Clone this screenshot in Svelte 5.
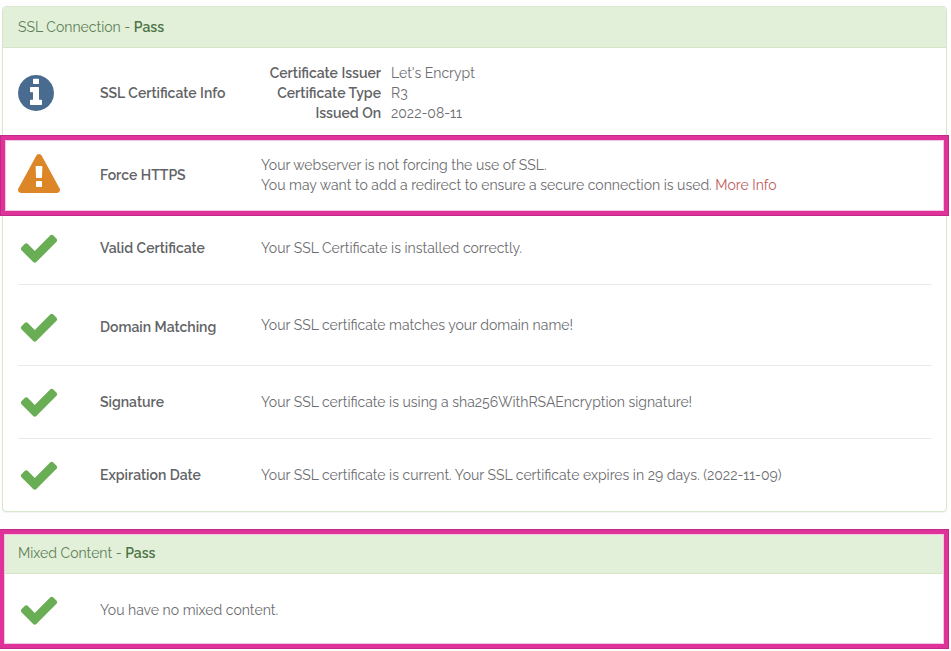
<script>
  const icons = {
    info: {
      box: '128 0 1792 1792',
      path: 'M1152 1376v-160q0-14-9-23t-23-9h-96v-512q0-14-9-23t-23-9h-320q-14 0-23 9t-9 23v160q0 14 9 23t23 9h96v320h-96q-14 0-23 9t-9 23v160q0 14 9 23t23 9h448q14 0 23-9t9-23zm-128-896v-160q0-14-9-23t-23-9h-192q-14 0-23 9t-9 23v160q0 14 9 23t23 9h192q14 0 23-9t9-23zm640 416q0 209-103 385.5t-279.5 279.5-385.5 103-385.5-103-279.5-279.5-103-385.5 103-385.5 279.5-279.5 385.5-103 385.5 103 279.5 279.5 103 385.5z'
    },
    warning: {
      box: '0 0 1792 1792',
      path: 'M1024 1375v-190q0-14-9.5-23.5t-22.5-9.5h-192q-13 0-22.5 9.5t-9.5 23.5v190q0 14 9.5 23.5t22.5 9.5h192q13 0 22.5-9.5t9.5-23.5zm-2-374l18-459q0-12-10-19-13-11-24-11h-220q-11 0-24 11-10 7-10 21l17 457q0 10 10 16.5t24 6.5h185q14 0 23.5-6.5t10.5-16.5zm-14-934l768 1408q35 63-2 126-17 29-46.5 46t-63.5 17h-1536q-34 0-63.5-17t-46.5-46q-37-63-2-126l768-1408q17-31 47-49t65-18 65 18 47 49z'
    },
    check: {
      box: '0 0 1792 1792',
      path: 'M1671 566q0 40-28 68l-724 724-136 136q-28 28-68 28t-68-28l-136-136-362-362q-28-28-28-68t28-68l136-136q28-28 68-28t68 28l294 295 656-657q28-28 68-28t68 28l136 136q28 28 28 68z'
    }
  };

  const certificate = [
    ['Certificate Issuer', "Let's Encrypt"],
    ['Certificate Type', 'R3'],
    ['Issued On', '2022-08-11']
  ];

  const checks = [
    { name: 'Valid Certificate', text: 'Your SSL Certificate is installed correctly.' },
    { name: 'Domain Matching', text: 'Your SSL certificate matches your domain name!', tall: true },
    { name: 'Signature', text: 'Your SSL certificate is using a sha256WithRSAEncryption signature!' },
    { name: 'Expiration Date', text: 'Your SSL certificate is current. Your SSL certificate expires in 29 days. (2022-11-09)' }
  ];
</script>

{#snippet icon(kind)}
  <svg class="icon {kind}" viewBox={icons[kind].box} aria-hidden="true"><path d={icons[kind].path} /></svg>
{/snippet}

<main>
  <section class="panel">
    <h2>SSL Connection - <strong>Pass</strong></h2>
    <div class="rows">
      <div class="row first">
        {@render icon('info')}
        <h3>SSL Certificate Info</h3>
        <dl>
          {#each certificate as [term, value]}
            <dt>{term}</dt>
            <dd>{value}</dd>
          {/each}
        </dl>
      </div>
      <div class="row marked">
        {@render icon('warning')}
        <h3>Force HTTPS</h3>
        <p>
          Your webserver is not forcing the use of SSL.<br />
          You may want to add a redirect to ensure a secure connection is used. <a href="#more">More Info</a>
        </p>
      </div>
      {#each checks as check}
        <div class="row" class:tall={check.tall}>
          {@render icon('check')}
          <h3>{check.name}</h3>
          <p>{check.text}</p>
        </div>
      {/each}
    </div>
  </section>

  <section class="panel marked">
    <h2>Mixed Content - <strong>Pass</strong></h2>
    <div class="rows">
      <div class="row">
        {@render icon('check')}
        <p>You have no mixed content.</p>
      </div>
    </div>
  </section>
</main>

<style>
  :global(body) {
    margin: 0;
    background: #fefefe;
  }

  main {
    padding: 6px 4px 4px 2px;
    font: 400 14px/20px Raleway, Lato, sans-serif;
    color: #6c6d70;
  }

  .panel {
    position: relative;
    margin-bottom: 20px;
    border: 1px solid #d8e6cb;
    border-radius: 4px;
    background: #fff;
    box-shadow: 0 1px 1px rgba(0, 0, 0, 0.05);
  }

  .panel:last-child {
    margin-bottom: 0;
  }

  h2 {
    margin: 0;
    padding: 10px 15px;
    border-bottom: 1px solid #d5e5c7;
    border-radius: 3px 3px 0 0;
    background: #e2f0d9;
    color: #5f8058;
    font-size: 14px;
    font-weight: 400;
  }

  strong,
  h3,
  dt {
    font-weight: 600;
  }

  strong {
    color: #4d7346;
  }

  h3,
  dt {
    color: #626366;
  }

  .rows {
    padding: 0 14px 0 15px;
  }

  .row {
    position: relative;
    display: flex;
    align-items: center;
    min-height: 72px;
    border-bottom: 1px solid #eaeaea;
  }

  .row.first {
    min-height: 90px;
  }

  .row.tall {
    min-height: 76px;
    padding-top: 4px;
  }

  .row.tall p {
    padding-bottom: 4px;
  }

  .row:last-child {
    border-bottom: 0;
  }

  .icon {
    flex: none;
    width: 42px;
    height: 42px;
    margin-right: 40px;
  }

  .info {
    fill: #496b90;
  }

  .warning {
    fill: #dc8627;
  }

  .check {
    fill: #69ad54;
  }

  h3 {
    flex: none;
    width: 161px;
    margin: 0;
    font-size: 14px;
  }

  p {
    margin: 0;
  }

  dl {
    display: grid;
    grid-template-columns: 120px auto;
    column-gap: 10px;
    margin: 0;
  }

  dt {
    text-align: right;
  }

  dd {
    margin: 0;
  }

  a {
    color: #c0605c;
    text-decoration: none;
  }

  .marked::after {
    content: '';
    position: absolute;
    inset: -4px -3px -3px -4px;
    border: 5px solid #df3399;
    box-shadow: inset 0 0 0 1px #f3c6e3;
    outline: 1px solid #c12a88;
    outline-offset: -1px;
    pointer-events: none;
  }

  .row.marked::after {
    inset: -4px -17px -5px -18px;
  }
</style>
